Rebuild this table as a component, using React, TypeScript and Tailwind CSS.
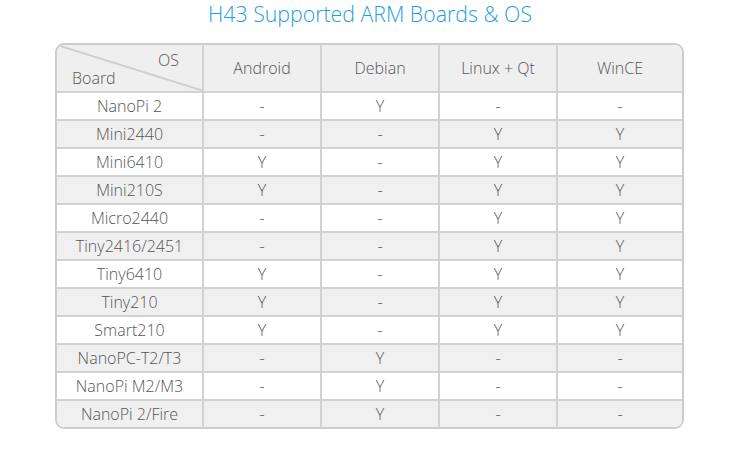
import React from "react";

const rows: [string, string, string, string, string][] = [
  ["NanoPi 2", "-", "Y", "-", "-"],
  ["Mini2440", "-", "-", "Y", "Y"],
  ["Mini6410", "Y", "-", "Y", "Y"],
  ["Mini210S", "Y", "-", "Y", "Y"],
  ["Micro2440", "-", "-", "Y", "Y"],
  ["Tiny2416/2451", "-", "-", "Y", "Y"],
  ["Tiny6410", "Y", "-", "Y", "Y"],
  ["Tiny210", "Y", "-", "Y", "Y"],
  ["Smart210", "Y", "-", "Y", "Y"],
  ["NanoPC-T2/T3", "-", "Y", "-", "-"],
  ["NanoPi M2/M3", "-", "Y", "-", "-"],
  ["NanoPi 2/Fire", "-", "Y", "-", "-"],
];

const heads = ["Android", "Debian", "Linux + Qt", "WinCE"];

export default function App() {
  return (
    <div className="w-[740px] h-[457px] bg-white font-['Open_Sans',sans-serif] font-light text-[#565656]">
      <h1 className="pt-[1px] text-center text-[21.3px] leading-[25px] text-[#1f9ce8]">
        H43 Supported ARM Boards &amp; OS
      </h1>
      <div className="ml-[55px] mt-[17px] w-[629px] rounded-[9px] border-2 border-[#cdcdcd] overflow-hidden">
        <div className="grid grid-cols-[147px_118px_118px_118px_1fr] text-[16px]">
          <div className="relative h-[48px] bg-[#efefef] border-r-2 border-b-2 border-[#d2d2d2]">
            <svg className="absolute inset-0" width="147" height="46" viewBox="0 0 147 46">
              <line x1="0" y1="0" x2="147" y2="46" stroke="#cfcfcf" strokeWidth="2" />
            </svg>
            <span className="absolute right-[23px] top-[4px] leading-[22px]">OS</span>
            <span className="absolute left-[15px] top-[22px] leading-[22px]">Board</span>
          </div>
          {heads.map((h, i) => (
            <div
              key={h}
              className={`h-[48px] bg-[#efefef] border-b-2 border-[#d2d2d2] flex items-center justify-center ${i < 3 ? "border-r-2" : ""}`}
            >
              {h}
            </div>
          ))}
          {rows.map((r, ri) =>
            r.map((c, ci) => (
              <div
                key={`${ri}-${ci}`}
                className={`flex items-center justify-center border-[#d2d2d2] ${ri % 2 === 1 ? "bg-[#f0f0f0]" : "bg-white"} ${ri < rows.length - 1 ? "h-[28px] border-b-2" : "h-[26px]"} ${ci < 4 ? "border-r-2" : ""}`}
              >
                {c}
              </div>
            ))
          )}
        </div>
      </div>
    </div>
  );
}
